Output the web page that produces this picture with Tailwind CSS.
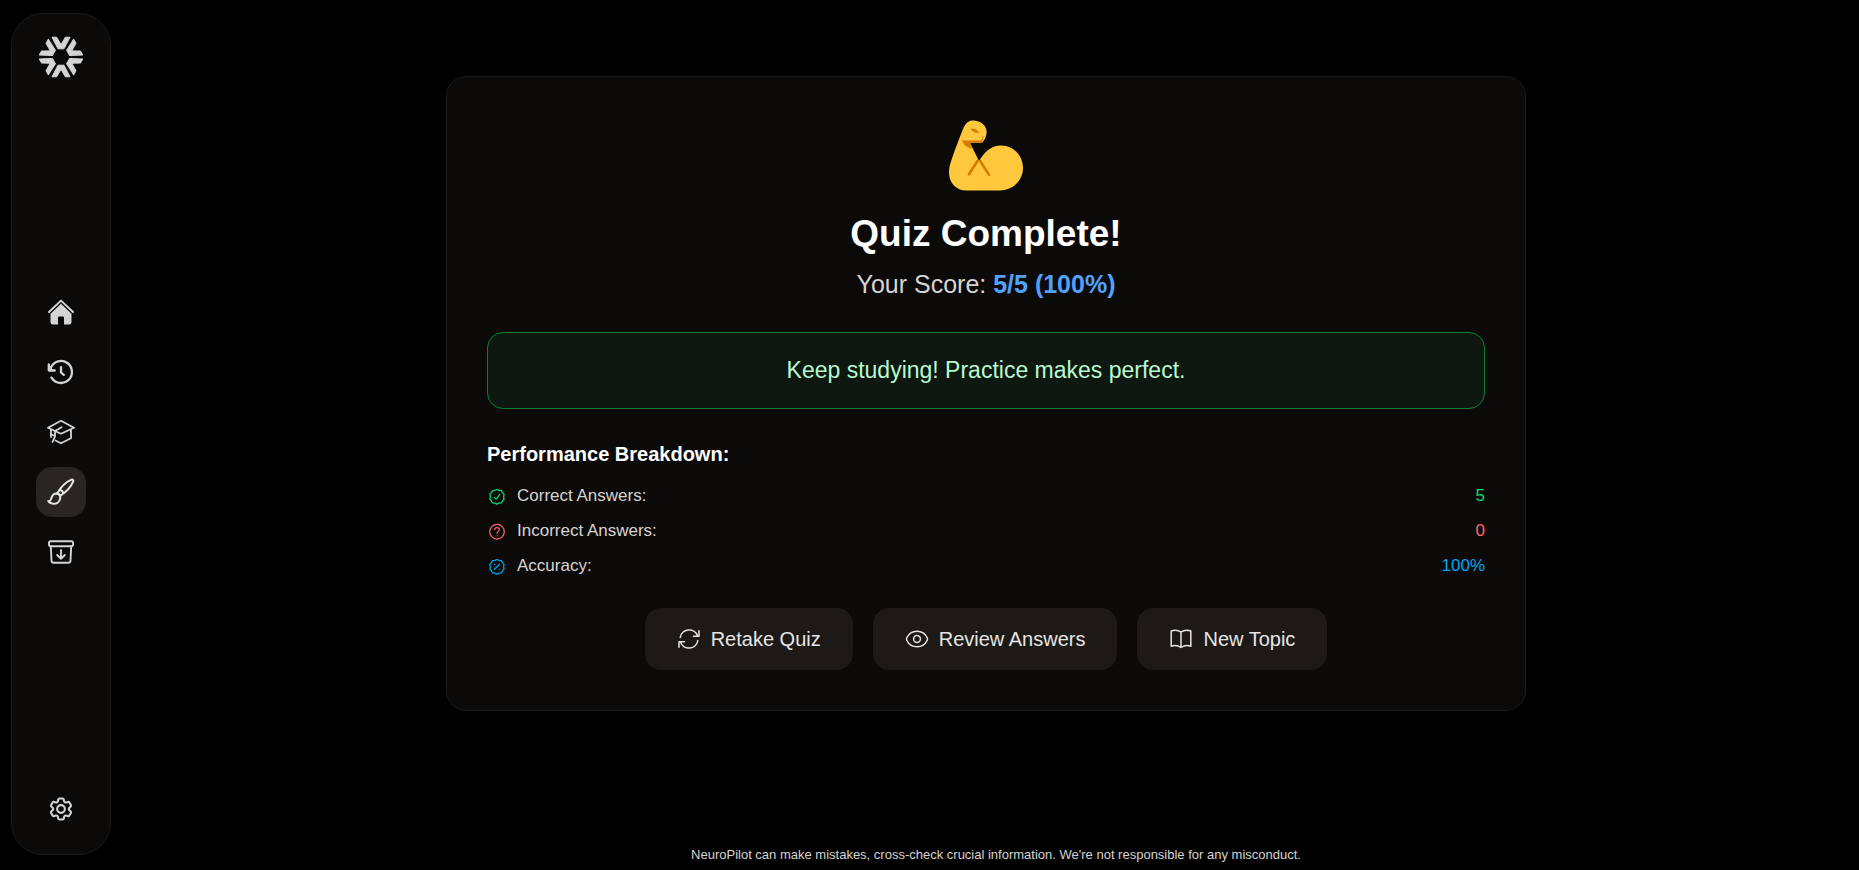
<!DOCTYPE html>
<html lang="en">
<head>
    <meta charset="UTF-8">
    <meta name="viewport" content="width=device-width, initial-scale=1.0">
    <title>NeuroPilot - Quiz</title>
    <script src="https://cdn.jsdelivr.net/npm/@tailwindcss/browser@4"></script>
</head>
<body class="bg-black font-['Liberation_Sans',Arial,sans-serif] text-stone-300">
    <div class="flex min-h-screen gap-0.5">
        <aside class="ml-[11px] mt-[13px] mb-[15px] flex w-[100px] shrink-0 flex-col items-center justify-between rounded-[32px] border border-stone-900 bg-stone-950 pt-[21px] pb-5">
            <a href="#" aria-label="NeuroPilot">
                <svg class="size-11" viewBox="-22 -22 44 44" fill="currentColor" stroke="currentColor" stroke-linejoin="round">
                    <defs>
                        <path id="ray" d="M-9-19.800h4.600L0-12.400l4.400-7.400H9L3-8.200h-6z"/>
                    </defs>
                    <use href="#ray"/>
                    <use href="#ray" transform="rotate(60)"/>
                    <use href="#ray" transform="rotate(120)"/>
                    <use href="#ray" transform="rotate(180)"/>
                    <use href="#ray" transform="rotate(240)"/>
                    <use href="#ray" transform="rotate(300)"/>
                </svg>
            </a>

            <nav class="flex flex-col gap-2.5">
                <a href="#" aria-label="Home" class="flex size-[50px] items-center justify-center rounded-2xl">
                    <svg class="size-7" viewBox="0 0 28 28" fill="currentColor">
                        <path d="M2 14 14 2.600l12 11.400" fill="none" stroke="currentColor" stroke-width="2" stroke-linecap="round" stroke-linejoin="round"/>
                        <path d="M14 5.800 24.500 15.800v8.400a2.400 2.400 0 0 1-2.400 2.400H17v-7a1 1 0 0 0-1-1h-4a1 1 0 0 0-1 1v7H5.900a2.400 2.400 0 0 1-2.400-2.400v-8.400z"/>
                    </svg>
                </a>
                <a href="#" aria-label="History" class="flex size-[50px] items-center justify-center rounded-2xl">
                    <svg class="size-7" viewBox="0 0 28 28" fill="none" stroke="currentColor" stroke-width="2.300" stroke-linecap="round" stroke-linejoin="round">
                        <path d="M4.500 19.600A11 11 0 1 0 3.900 9.500"/>
                        <path d="M1.800 6.500v6h6"/>
                        <path d="M2 8.500v4h4z" fill="currentColor" stroke-width="1"/>
                        <path d="M14 9.200v5.300l2.800 2.400"/>
                    </svg>
                </a>
                <a href="#" aria-label="Study" class="flex size-[50px] items-center justify-center rounded-2xl">
                    <svg class="size-7" viewBox="0 0 28 28" fill="none" stroke="currentColor" stroke-width="1.800" stroke-linecap="round" stroke-linejoin="round">
                        <path d="M14 2.800 27 9.800 14 15.800 1 9.800z"/>
                        <path d="M24 12v8.300l-10 5-5.500-2.800M4 12v7"/>
                        <path d="M14.500 9.200 8 13v5.500L5.500 24M4.500 16.500l3.300 1.500"/>
                    </svg>
                </a>
                <a href="#" aria-label="Quiz" aria-current="page" class="flex size-[50px] items-center justify-center rounded-2xl bg-stone-800 text-stone-200">
                    <svg class="size-7" viewBox="0 0 28 28" fill="none" stroke="currentColor" stroke-width="2" stroke-linecap="round" stroke-linejoin="round">
                        <path d="M10.300 15.300C13.500 9.500 19 4 24.500 1.600c1.200-.5 2.200.5 1.700 1.800C24 9 18.800 14.300 13 17.800"/>
                        <path d="M10.200 15.400c1.600.2 2.700 1.200 2.900 2.700M13.500 12c1.400.6 2.300 1.500 2.900 2.900"/>
                        <path d="M9.500 15.500c2.400.1 4.200 2.300 3.700 4.900-.7 3.800-3.800 5.600-7 5.300-2.300-.2-4.200-1.200-5-2.600 1.300.3 2.200-.2 2.700-1.600.7-2.200 1.200-6 5.600-6z"/>
                    </svg>
                </a>
                <a href="#" aria-label="Archive" class="flex size-[50px] items-center justify-center rounded-2xl">
                    <svg class="size-7" viewBox="0 0 28 28" fill="none" stroke="currentColor" stroke-width="1.900" stroke-linecap="round" stroke-linejoin="round">
                        <rect x="2" y="3.200" width="24" height="5" rx="1.600"/>
                        <path d="M3.800 8.200 4.500 22.500a2.200 2.200 0 0 0 2.200 2.200h14.600a2.200 2.200 0 0 0 2.200-2.200l.7-14.300"/>
                        <path d="M14 12v8.600M10.200 17l3.800 3.700 3.800-3.700"/>
                    </svg>
                </a>
            </nav>

            <a href="#" aria-label="Settings" class="flex size-[50px] items-center justify-center rounded-2xl">
                <svg class="size-7" viewBox="0 0 24 24" fill="none" stroke="currentColor" stroke-width="1.800" stroke-linecap="round" stroke-linejoin="round">
                    <path d="M9.594 3.940c.09-.542.560-.940 1.110-.940h2.593c.550 0 1.020.398 1.110.940l.213 1.281c.063.374.313.686.645.870.074.040.147.083.220.127.325.196.720.257 1.075.124l1.217-.456a1.125 1.125 0 0 1 1.370.490l1.296 2.247a1.125 1.125 0 0 1-.260 1.431l-1.003.827c-.293.241-.438.613-.430.992a7.723 7.723 0 0 1 0 .255c-.008.378.137.750.430.991l1.004.827c.424.350.534.955.260 1.430l-1.298 2.247a1.125 1.125 0 0 1-1.369.491l-1.217-.456c-.355-.133-.750-.072-1.076.124a6.470 6.470 0 0 1-.220.128c-.331.183-.581.495-.644.869l-.213 1.281c-.090.543-.560.940-1.110.940h-2.594c-.550 0-1.019-.398-1.110-.940l-.213-1.281c-.062-.374-.312-.686-.644-.870a6.520 6.520 0 0 1-.220-.127c-.325-.196-.720-.257-1.076-.124l-1.217.456a1.125 1.125 0 0 1-1.369-.490l-1.297-2.247a1.125 1.125 0 0 1 .260-1.431l1.004-.827c.292-.240.437-.613.430-.991a6.932 6.932 0 0 1 0-.255c.007-.380-.138-.751-.430-.992l-1.004-.827a1.125 1.125 0 0 1-.260-1.430l1.297-2.247a1.125 1.125 0 0 1 1.370-.491l1.216.456c.356.133.751.072 1.076-.124.072-.044.146-.086.220-.128.332-.183.582-.495.644-.869z"/>
                    <circle cx="12" cy="12" r="3.300"/>
                </svg>
            </a>
        </aside>

        <div class="flex grow flex-col items-center">
            <main class="mt-[76px] flex w-full max-w-[1080px] flex-col rounded-[20px] border border-stone-900 bg-stone-950 p-10">
                <section class="text-center">
                    <svg class="mx-auto mt-[3px] h-[71px] w-[74px]" viewBox="86 60 222 212" role="img" aria-label="Flexed biceps">
                        <path fill="#ffc83d" d="M130 82c7-15 16-22 31-21 23 2 39 17 38 36-1 13-7 24-14 31h-36l27 55c16-29 38-47 66-47 37 0 66 30 66 67s-29 68-69 68H138c-34 0-57-28-51-67 3-21 36-105 43-122z"/>
                        <path fill="#d67d00" d="M151 85c12-1 20 4 27 12-12 3-22-1-27-12zM125 121h48c10 0 15-3 14-10l-4-5c7 2 8 7 6 11l-6 11h-33l5 18c-17-5-27-14-30-25z"/>
                        <path fill="none" stroke="#d67d00" stroke-width="8" stroke-linecap="round" d="m171 183-25 39M180 183l26 41"/>
                    </svg>
                    <h1 class="mt-[23px] text-[37px] leading-10 font-bold text-white">Quiz Complete!</h1>
                    <p class="mt-3.5 text-[25px] leading-8">Your Score: <span class="font-bold text-blue-400">5/5 (100%)</span></p>
                </section>

                <p class="mt-8 rounded-2xl border border-green-700 bg-[#0f1810] px-6 py-5 text-center text-[23px] leading-[35px] text-green-200">Keep studying! Practice makes perfect.</p>

                <section class="mt-[31px]">
                    <h2 class="text-xl leading-7 font-bold text-white">Performance Breakdown:</h2>
                    <dl class="mt-3.5 flex flex-col gap-[7px] text-[17px] leading-7">
                        <div class="flex justify-between">
                            <dt class="flex items-center gap-2.5">
                                <svg class="size-5 text-green-400" viewBox="-1 -2 26 26" fill="none" stroke="currentColor" stroke-width="1.600" stroke-linecap="round" stroke-linejoin="round">
                                    <path d="M12 2.500l2.800 1.200 3 .3 1.400 2.700 2 2.300-.6 3 .6 3-2 2.300-1.400 2.700-3 .3-2.800 1.200-2.800-1.200-3-.3-1.400-2.700-2-2.300.6-3-.6-3 2-2.300L6.200 4l3-.3z"/>
                                    <path d="m8.500 12.800 2.500 2.200 4.500-6"/>
                                </svg>
                                Correct Answers:
                            </dt>
                            <dd class="text-green-400">5</dd>
                        </div>
                        <div class="flex justify-between">
                            <dt class="flex items-center gap-2.5">
                                <svg class="size-5 text-red-400" viewBox="-1 -2 26 26" fill="none" stroke="currentColor" stroke-width="1.600" stroke-linecap="round" stroke-linejoin="round">
                                    <circle cx="12" cy="12" r="9.500"/>
                                    <path d="M9 9.200C9.200 7.500 10.400 6.700 12 6.700s3 1 3 2.600c0 2.200-3 2.200-3 4.700M12 17.200v.1"/>
                                </svg>
                                Incorrect Answers:
                            </dt>
                            <dd class="text-red-400">0</dd>
                        </div>
                        <div class="flex justify-between">
                            <dt class="flex items-center gap-2.5">
                                <svg class="size-5 text-sky-500" viewBox="-1 -2 26 26" fill="none" stroke="currentColor" stroke-width="1.600" stroke-linecap="round" stroke-linejoin="round">
                                    <path d="M12 2.500l2.800 1.200 3 .3 1.400 2.700 2 2.300-.6 3 .6 3-2 2.300-1.400 2.700-3 .3-2.800 1.200-2.800-1.200-3-.3-1.400-2.700-2-2.300.6-3-.6-3 2-2.300L6.200 4l3-.3z"/>
                                    <path d="m15.200 8.800-6.400 6.400M9 9h.2M14.800 15h.2"/>
                                </svg>
                                Accuracy:
                            </dt>
                            <dd class="text-sky-500">100%</dd>
                        </div>
                    </dl>
                </section>

                <div class="mt-7 flex flex-wrap justify-center gap-5 text-xl leading-[30px] text-stone-200">
                    <button type="button" class="flex items-center gap-2.5 rounded-2xl bg-stone-900 px-8 py-4">
                        <svg class="size-6" viewBox="0 0 24 24" fill="none" stroke="currentColor" stroke-width="1.500" stroke-linecap="round" stroke-linejoin="round">
                            <path d="M3.200 10.500a9 9 0 0 1 17.300-1.800M22 3.800v5.500h-5.500M20.800 13.500a9 9 0 0 1-17.300 1.800M2 20.200v-5.500h5.500"/>
                        </svg>
                        Retake Quiz
                    </button>
                    <button type="button" class="flex items-center gap-2.5 rounded-2xl bg-stone-900 px-8 py-4">
                        <svg class="size-6" viewBox="0 0 24 24" fill="none" stroke="currentColor" stroke-width="1.500">
                            <path d="M12 4.200c4.700 0 8.500 2.800 10.200 6.500.4.900.4 1.700 0 2.600-1.700 3.700-5.500 6.500-10.200 6.500s-8.500-2.800-10.200-6.500c-.4-.9-.4-1.700 0-2.600C3.500 7 7.300 4.200 12 4.200z"/>
                            <circle cx="12" cy="12" r="3.400"/>
                        </svg>
                        Review Answers
                    </button>
                    <button type="button" class="flex items-center gap-2.5 rounded-2xl bg-stone-900 px-8 py-4">
                        <svg class="size-6" viewBox="0 0 24 24" fill="none" stroke="currentColor" stroke-width="1.500" stroke-linecap="round" stroke-linejoin="round">
                            <path d="M12 5C9 3 5.500 2.800 2.200 4v15.200C5.500 18.200 9 18.500 12 20.500c3-2 6.500-2.300 9.800-1.300V4C18.500 2.800 15 3 12 5zM12 5v15.500"/>
                        </svg>
                        New Topic
                    </button>
                </div>
            </main>

            <footer class="mt-auto pb-[5px] pl-5 text-[13px] leading-5">
                <p>NeuroPilot can make mistakes, cross-check crucial information. We're not responsible for any misconduct.</p>
            </footer>
        </div>
    </div>
</body>
</html>
